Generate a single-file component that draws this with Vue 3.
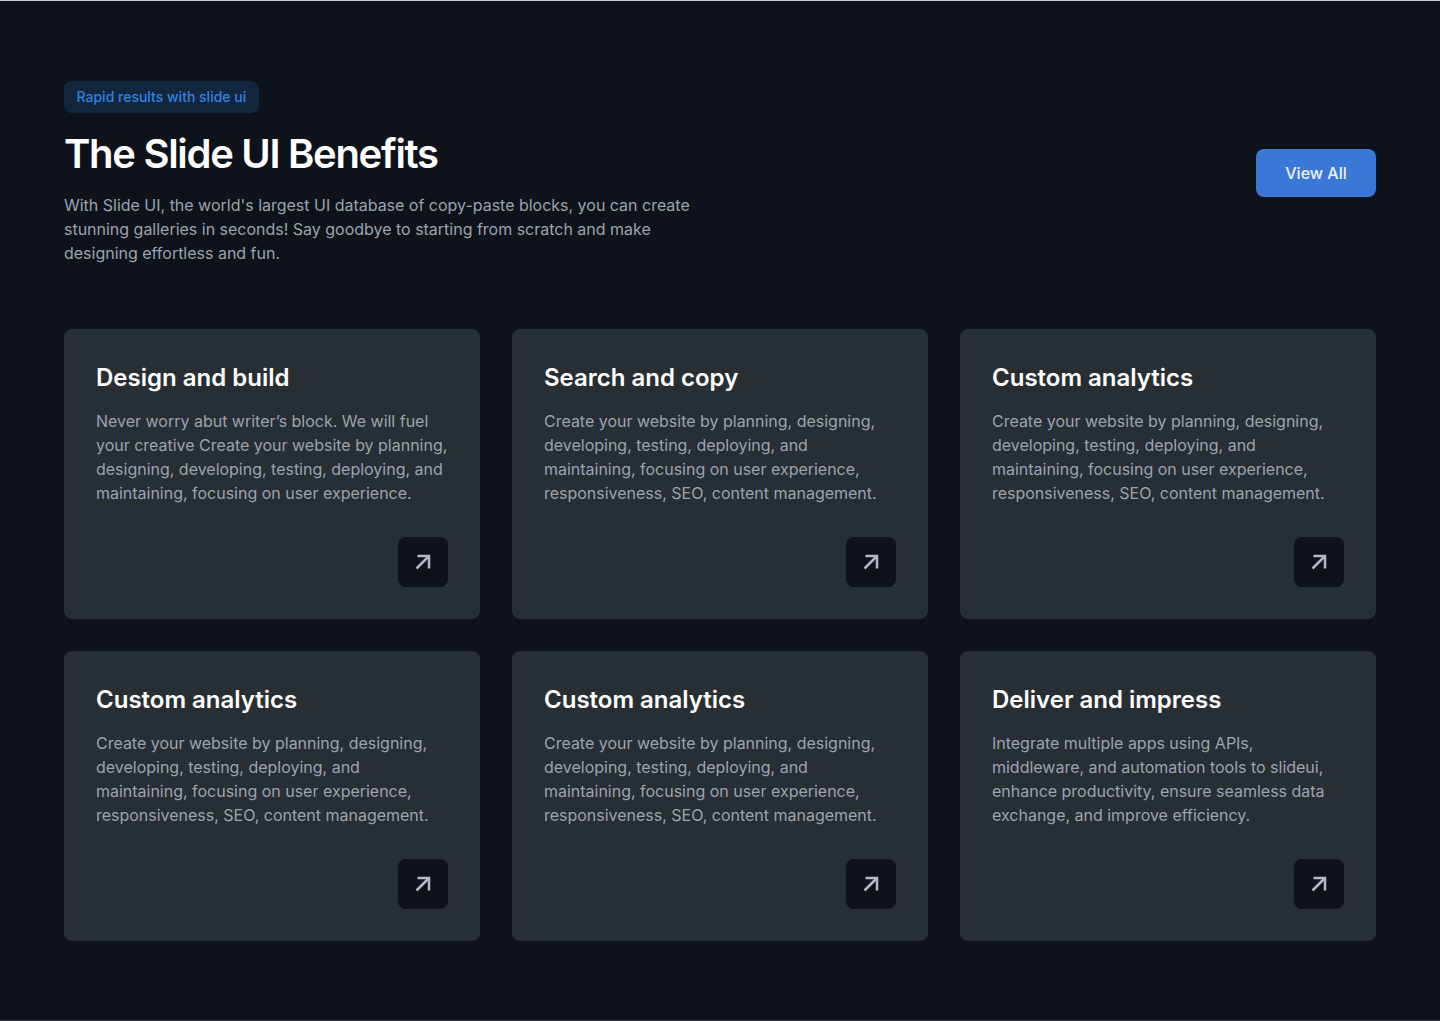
<script setup>
const cards = [
  { title: 'Design and build', text: 'Never worry abut writer’s block. We will fuel your creative Create your website by planning, designing, developing, testing, deploying, and maintaining, focusing on user experience.' },
  { title: 'Search and copy', text: 'Create your website by planning, designing, developing, testing, deploying, and maintaining, focusing on user experience, responsiveness, SEO, content management.' },
  { title: 'Custom analytics', text: 'Create your website by planning, designing, developing, testing, deploying, and maintaining, focusing on user experience, responsiveness, SEO, content management.' },
  { title: 'Custom analytics', text: 'Create your website by planning, designing, developing, testing, deploying, and maintaining, focusing on user experience, responsiveness, SEO, content management.' },
  { title: 'Custom analytics', text: 'Create your website by planning, designing, developing, testing, deploying, and maintaining, focusing on user experience, responsiveness, SEO, content management.' },
  { title: 'Deliver and impress', text: 'Integrate multiple apps using APIs, middleware, and automation tools to slideui, enhance productivity, ensure seamless data exchange, and improve efficiency.' },
]
</script>

<template>
  <main class="page">
    <header class="head">
      <div class="intro">
        <span class="badge">Rapid results with slide ui</span>
        <h1>The Slide UI Benefits</h1>
        <p>With Slide UI, the world's largest UI database of copy-paste blocks, you can create stunning galleries in seconds! Say goodbye to starting from scratch and make designing effortless and fun.</p>
      </div>
      <button class="view">View All</button>
    </header>
    <section class="grid">
      <article v-for="(c, i) in cards" :key="i" class="card">
        <h2>{{ c.title }}</h2>
        <p>{{ c.text }}</p>
        <a class="go" href="#" aria-label="Open">
          <svg width="16" height="16" viewBox="0 0 16 16" fill="none" stroke="#b4b9c5" stroke-width="2.500">
            <path d="M1.500 14.500 14 2" />
            <path d="M2.500 2H14V14.500" />
          </svg>
        </a>
      </article>
    </section>
  </main>
</template>

<style>
html, body { margin: 0; background: #0d121b; }
</style>

<style scoped>
.page {
  box-sizing: border-box;
  height: 1021px;
  padding: 80px 64px 0;
  background: #0d121b;
  border-top: 1px solid #c9ccd1;
  border-bottom: 1px solid #3a3d42;
  font-family: Inter, sans-serif;
}
.head {
  display: flex;
  justify-content: space-between;
  align-items: center;
}
.intro { width: 640px; }
.badge {
  display: inline-block;
  box-sizing: border-box;
  height: 32px;
  padding: 0 12.500px;
  border-radius: 8px;
  background: #12263e;
  color: #2f84e4;
  font-size: 14px;
  font-weight: 500;
  line-height: 32px;
}
h1 {
  margin: 16px 0 0;
  padding-top: 1px;
  height: 47px;
  color: #fff;
  font-size: 40px;
  line-height: 48px;
  font-weight: 600;
  letter-spacing: -1.300px;
}
.intro p {
  margin: 16px 0 0;
  color: #9ca3af;
  font-size: 16px;
  line-height: 24px;
  letter-spacing: -0.010px;
}
.view {
  width: 120px;
  height: 48px;
  border: 0;
  border-radius: 8px;
  background: #3a77d6;
  color: #eef4fe;
  font: 500 16px/24px Inter, sans-serif;
}
.grid {
  display: grid;
  grid-template-columns: repeat(3, 416px);
  gap: 32px;
  margin-top: 64px;
}
.card {
  position: relative;
  box-sizing: border-box;
  height: 290px;
  padding: 32px;
  border-radius: 8px;
  background: #272e34;
}
h2 {
  margin: 0;
  padding-top: 1px;
  height: 31px;
  color: #fff;
  font-size: 24px;
  line-height: 32px;
  font-weight: 600;
}
.card p {
  margin: 16px 0 0;
  color: #9ca3af;
  font-size: 16px;
  line-height: 24px;
  letter-spacing: -0.010px;
}
.go {
  position: absolute;
  right: 32px;
  bottom: 32px;
  display: flex;
  align-items: center;
  justify-content: center;
  width: 50px;
  height: 50px;
  border-radius: 8px;
  background: #0d121b;
}
</style>
